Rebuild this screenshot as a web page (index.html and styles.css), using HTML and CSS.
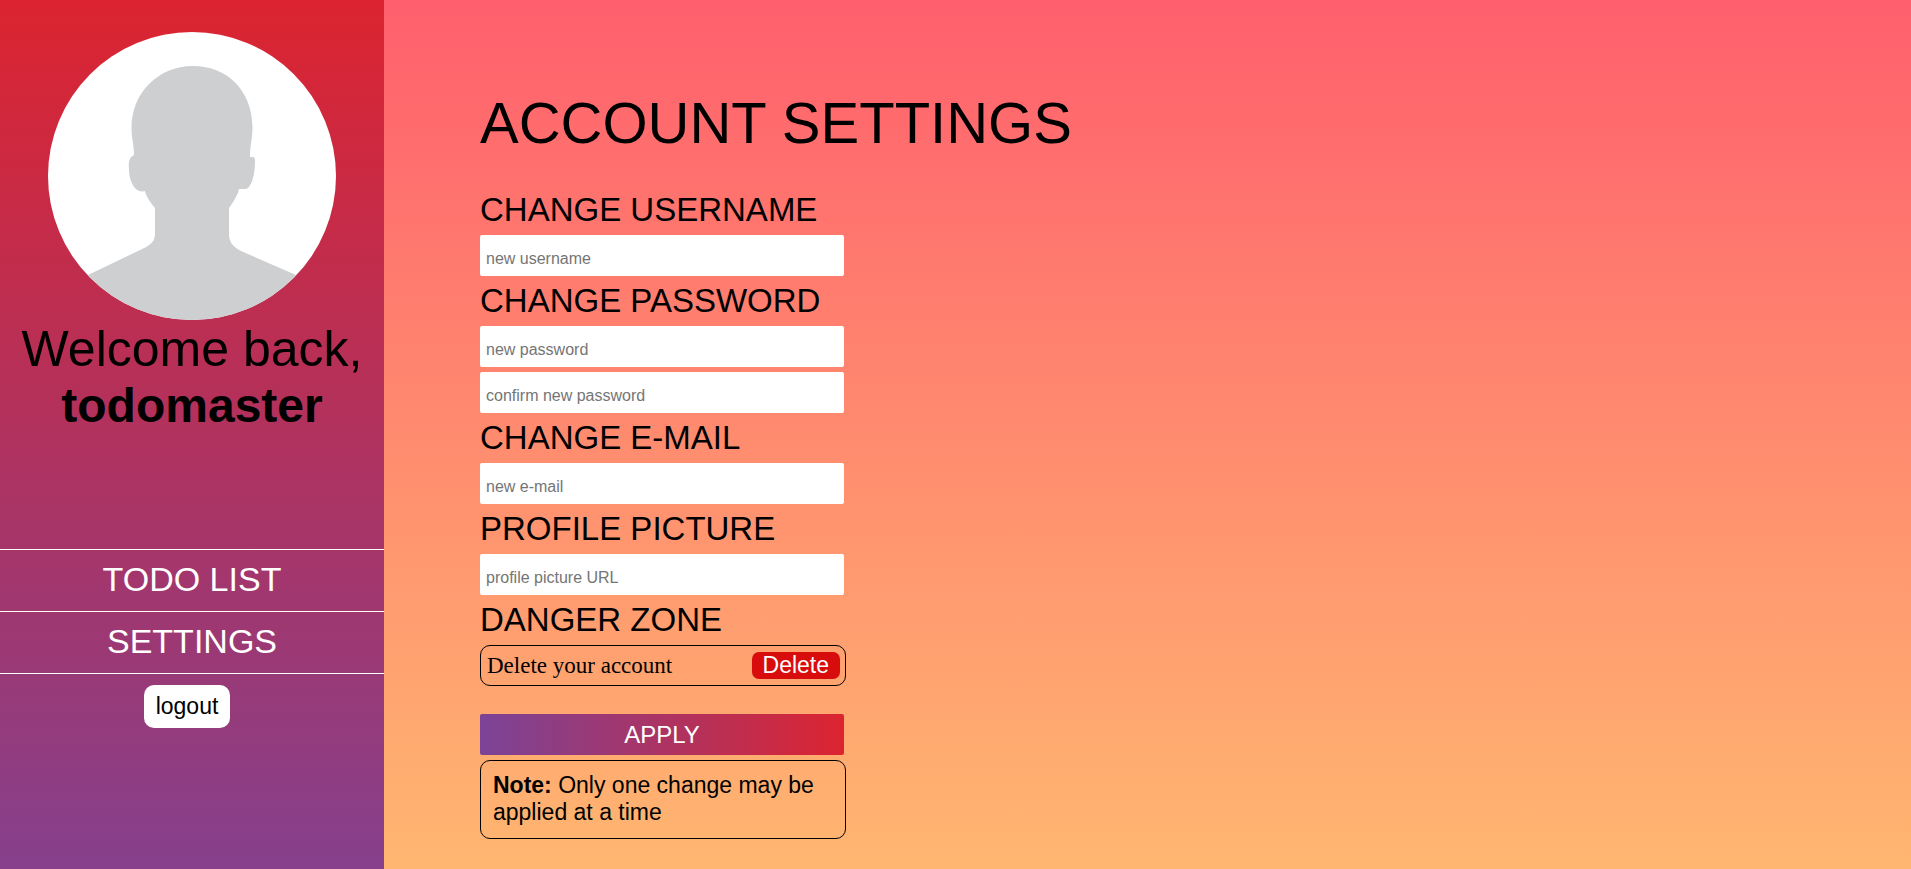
FILE: index.html
```html
<!DOCTYPE html>
<html lang="en">
<head>
<meta charset="utf-8">
<meta name="viewport" content="width=device-width, initial-scale=1">
<title>Account settings</title>
<link rel="stylesheet" href="styles.css">
</head>
<body>
<aside class="sidebar">
  <svg class="avatar" viewBox="0 0 288 288" role="img" aria-label="Profile picture">
    <rect width="288" height="288" fill="#fff"/>
    <path fill="#cdcfd1" d="M145 34C180 34 204 59 204.500 95C204.500 107 202 113 202 125L205 125Q207 125 207 129C207 144 203 157 197 157L191 157C190 163 184 172 181 176L181 201C181 210 184 214 193 219L248 243L288 264V288H0V264L40 243L90 219C104 213 107 209 107 201V176C102 170 98 164 97 159C87 162 81 149 81 137C80 129 82 125 86 123C86 113 83.500 106 83.500 96C83.500 61 110 34 145 34Z"/>
  </svg>
  <p class="welcome">Welcome back,<br><strong class="user">todomaster</strong></p>
  <nav class="menu">
    <a class="menu-link" href="#todo">TODO LIST</a>
    <a class="menu-link" href="#settings">SETTINGS</a>
  </nav>
  <button class="logout" type="button">logout</button>
</aside>
<main class="content">
  <h1 class="title">ACCOUNT SETTINGS</h1>
  <form class="settings">
    <label class="heading" for="username">CHANGE USERNAME</label>
    <input class="field" id="username" type="text" placeholder="new username">
    <label class="heading" for="password">CHANGE PASSWORD</label>
    <input class="field" id="password" type="password" placeholder="new password">
    <input class="field" type="password" placeholder="confirm new password" aria-label="Confirm new password">
    <label class="heading" for="email">CHANGE E-MAIL</label>
    <input class="field" id="email" type="email" placeholder="new e-mail">
    <label class="heading" for="picture">PROFILE PICTURE</label>
    <input class="field" id="picture" type="url" placeholder="profile picture URL">
    <h2 class="heading">DANGER ZONE</h2>
    <div class="danger">
      <span class="danger-text">Delete your account</span>
      <button class="delete" type="button">Delete</button>
    </div>
    <button class="apply" type="submit">APPLY</button>
    <p class="note"><strong>Note:</strong> Only one change may be applied at a time</p>
  </form>
</main>
</body>
</html>
```
FILE: styles.css
```css
* {
  box-sizing: border-box;
}

body {
  display: flex;
  min-height: 100vh;
  margin: 0;
  font-family: "Liberation Sans", Arial, sans-serif;
  color: #000;
}

.sidebar {
  display: flex;
  flex: 0 0 384px;
  flex-direction: column;
  align-items: center;
  padding-top: 32px;
  background: linear-gradient(#dc2430, #7b4397 112%);
}

.avatar {
  width: 75%;
  border-radius: 50%;
}

.welcome {
  margin: 1px 0 115px;
  font-size: 50px;
  line-height: 56px;
  text-align: center;
}

.user {
  font-size: 48px;
}

.menu {
  width: 100%;
  border-top: 1px solid #fff;
}

.menu-link {
  display: block;
  padding: 10px 0 12px;
  border-bottom: 1px solid #fff;
  color: #fff;
  font-size: 34px;
  line-height: 39px;
  text-align: center;
  text-decoration: none;
}

.logout {
  margin: 11px 10px 0 0;
  padding: 8px 12px;
  border: 0;
  border-radius: 10px;
  background: #fff;
  color: #000;
  font: 23px/27px "Liberation Sans", Arial, sans-serif;
}

.content {
  flex: 1;
  padding: 89px 96px 30px;
  background: linear-gradient(#ff5f6d, #ffc371 114%);
}

.title {
  margin: 0 0 34px;
  font-size: 58px;
  font-weight: 400;
  line-height: 67px;
}

.settings {
  display: flex;
  flex-direction: column;
  max-width: 366px;
}

.heading {
  margin: 0 0 6px;
  font-size: 33px;
  font-weight: 400;
  line-height: 39px;
}

.field,
.apply {
  height: 41px;
  margin: 0 2px 5px 0;
  border: 0;
  border-radius: 2px;
}

.field {
  padding: 9px 6px 3px;
  background: #fff;
  font: 16px "Liberation Sans", Arial, sans-serif;
}

.field::placeholder {
  color: #757575;
}

.danger {
  display: flex;
  align-items: center;
  justify-content: space-between;
  margin-bottom: 28px;
  padding: 6px 5px 6px 6px;
  border: 1px solid #000;
  border-radius: 10px;
}

.danger-text {
  font: 23px/27px "Liberation Serif", "Times New Roman", serif;
}

.delete {
  padding: 0 11px;
  border: 0;
  border-radius: 7px;
  background: #d80c0c;
  color: #fff;
  font: 23px/27px "Liberation Sans", Arial, sans-serif;
}

.apply {
  background: linear-gradient(to right, #7b4397, #dc2430);
  color: #fff;
  font: 24px/27px "Liberation Sans", Arial, sans-serif;
}

.note {
  margin: 0;
  padding: 11px 12px 12px;
  border: 1px solid #000;
  border-radius: 10px;
  font-size: 23px;
  line-height: 27px;
}
```
